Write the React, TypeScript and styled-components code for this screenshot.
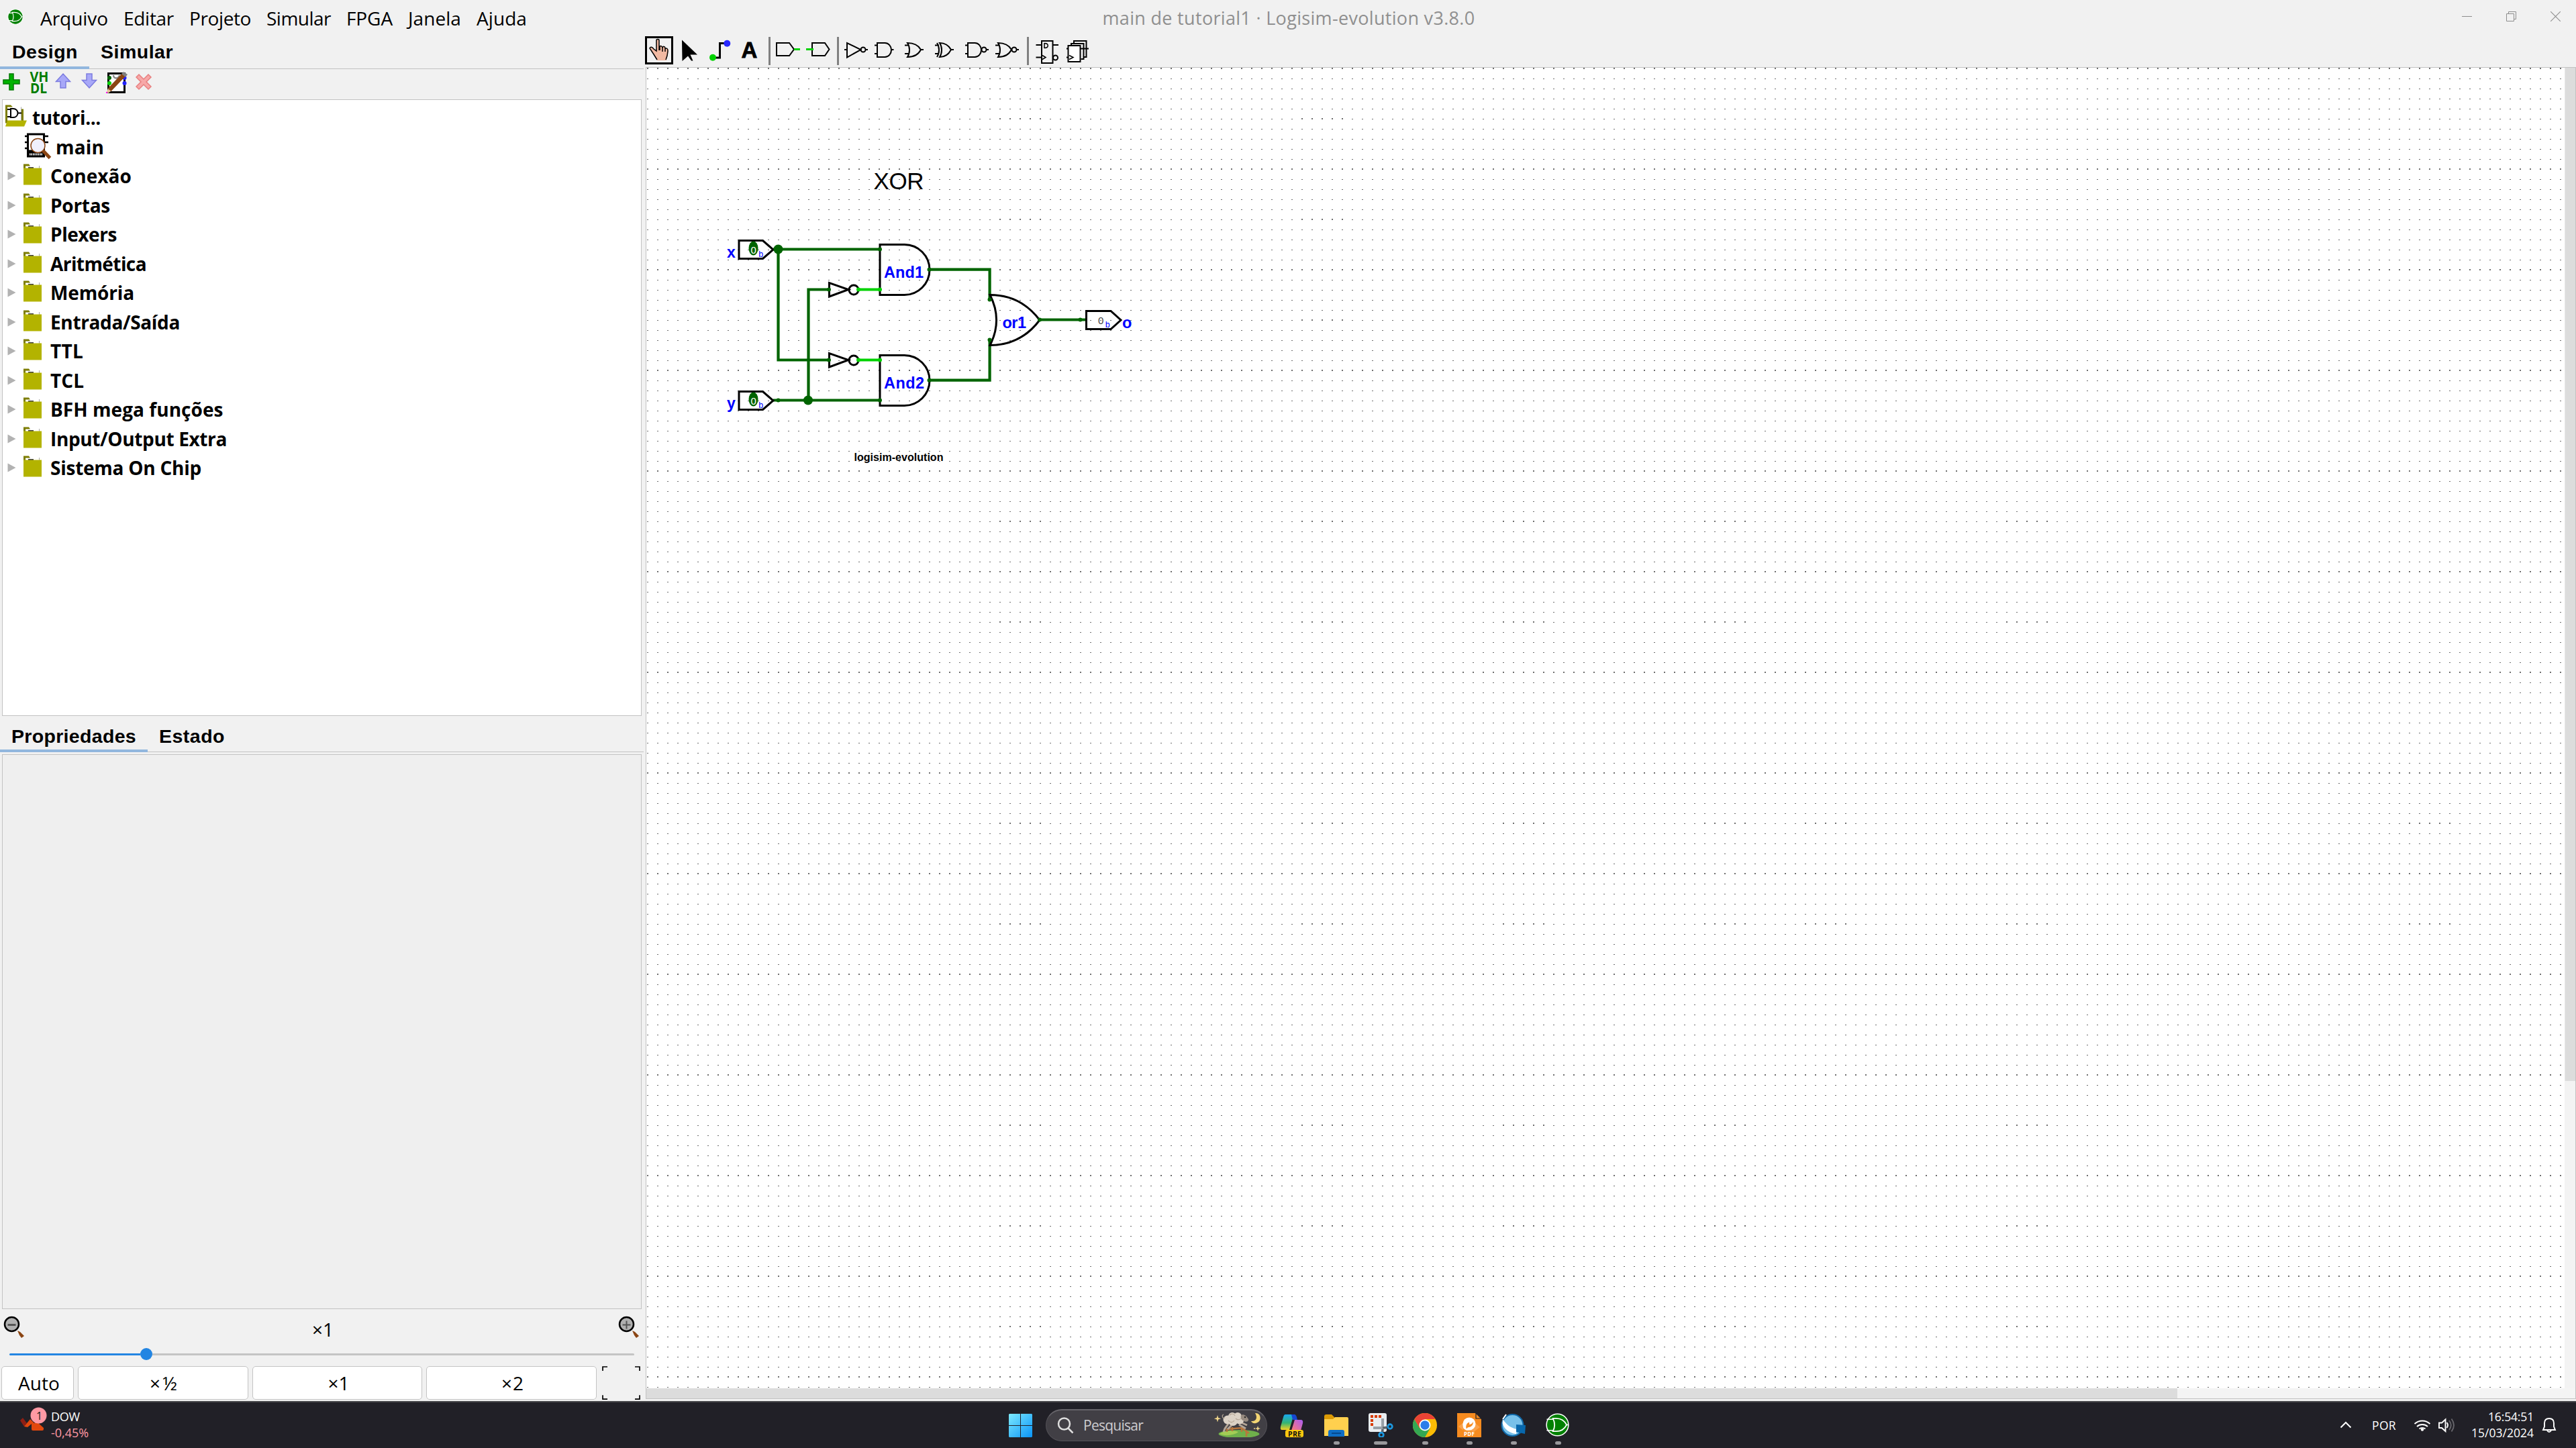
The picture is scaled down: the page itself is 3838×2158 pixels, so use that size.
import React, { useLayoutEffect, useRef, useState } from "react";
import styled, { createGlobalStyle } from "styled-components";

const Global = createGlobalStyle`
  * { box-sizing: border-box; }
  html, body { margin: 0; padding: 0; background: #f1f1f1; overflow: hidden; }
  svg { display: block; flex: none; }
`;

const UI = `"Open Sans", "Noto Sans", sans-serif`;
const ARIAL = `"Liberation Sans", Arial, sans-serif`;

const Screen = styled.div`
  width: 3838px;
  height: 2158px;
  display: flex;
  flex-direction: column;
  background: #f1f1f1;
  color: #000;
  font-family: ${UI};
`;

/* ---------- text fitted to a set advance width ---------- */
const Label = styled.span<{ $size: number; $lh?: number; $bold?: boolean; $arial?: boolean; $color?: string }>`
  display: block;
  flex: none;
  white-space: pre;
  font-family: ${(p) => (p.$arial ? ARIAL : UI)};
  font-size: ${(p) => p.$size}px;
  line-height: ${(p) => p.$lh ?? 40}px;
  font-weight: ${(p) => (p.$bold ? 700 : 400)};
  color: ${(p) => p.$color ?? "inherit"};
`;

type FitProps = { w: number; size: number; lh?: number; bold?: boolean; arial?: boolean; color?: string; children: string };

function Fit({ w, size, lh, bold, arial, color, children }: FitProps) {
  const ref = useRef<HTMLSpanElement>(null);
  const [gap, setGap] = useState(0);
  useLayoutEffect(() => {
    const el = ref.current;
    if (!el) return;
    const range = document.createRange();
    range.selectNodeContents(el);
    const natural = range.getBoundingClientRect().width - gap * children.length;
    setGap((w - natural) / children.length);
  }, [w, children]);
  return (
    <Label ref={ref} $size={size} $lh={lh} $bold={bold} $arial={arial} $color={color} style={{ width: w, letterSpacing: gap }}>
      {children}
    </Label>
  );
}

/* ---------- title bar ---------- */
const TitleBar = styled.header`
  height: 52px;
  flex: none;
  display: flex;
  align-items: flex-start;
  padding: 7px 23px 0 11px;
`;
const LogoSlot = styled.div`
  padding-top: 6px;
  width: 49px;
`;
const Menus = styled.nav`
  display: flex;
  gap: 23px;
`;
const TitleText = styled.div`
  margin-left: 857.500px;
  flex: 1;
`;
const WindowButtons = styled.div`
  display: flex;
  gap: 51px;
  padding-top: 10px;
`;

const LogisimLogo = ({ size }: { size: number }) => (
  <svg width={size} height={size} viewBox="0 0 36 36">
    <circle cx="18" cy="18" r="16.8" fill="#008000" stroke="#fff" strokeWidth="1.6" />
    <path d="M1.5 9.500h10.500M1.500 26.500h10.500M31 18h4" stroke="#fff" strokeWidth="1.700" />
    <path d="M11 8h5c8 0 13 4 16 10c-3 6-8 10-16 10h-5c3-6 3-14 0-20z" fill="#008000" stroke="#fff" strokeWidth="1.800" />
  </svg>
);

/* ---------- body ---------- */
const Body = styled.main`
  display: flex;
  height: 2036px;
  flex: none;
`;
const Side = styled.aside`
  width: 960px;
  flex: none;
  display: flex;
  flex-direction: column;
`;
const Tabs = styled.div<{ $h: number; $top: number }>`
  height: ${(p) => p.$h}px;
  width: 959px;
  flex: none;
  display: flex;
  align-items: stretch;
  background: linear-gradient(#c2c2c2, #c2c2c2) 0 100% / 100% 1px no-repeat;
  & > div {
    padding-top: ${(p) => p.$top}px;
  }
`;
const Tab = styled.div<{ $active?: boolean; $left?: number; $right?: number }>`
  padding-left: ${(p) => p.$left ?? 18}px;
  padding-right: ${(p) => p.$right ?? 18}px;
  border-bottom: 4px solid ${(p) => (p.$active ? "#92b7de" : "transparent")};
`;
const TreeTools = styled.div`
  height: 45px;
  flex: none;
  & > svg { overflow: visible; }
`;
const TreeBox = styled.div`
  height: 919px;
  width: 953px;
  margin-left: 3px;
  flex: none;
  background: #fff;
  border: 1px solid #c2c2c2;
  padding-top: 4.500px;
`;
const Row = styled.div<{ $h?: number }>`
  height: ${(p) => p.$h ?? 43.5}px;
  display: flex;
  align-items: flex-start;
`;
const PropBox = styled.div`
  height: 827px;
  width: 953px;
  margin: 3px 0 0 3px;
  flex: none;
  background: #efefef;
  border: 1px solid #c2c2c2;
`;
const ZoomRow = styled.div`
  height: 56px;
  flex: none;
  display: flex;
  padding: 10px 0 0 5px;
`;
const ZoomValue = styled.div`
  padding: 0 0 0 429px;
  width: 885px;
`;
const Slider = styled.div`
  height: 29px;
  flex: none;
  display: flex;
  align-items: flex-start;
  padding: 2px 0 0 14px;
`;
const Filled = styled.div`
  width: 195px;
  height: 3px;
  margin-top: 7.500px;
  border-radius: 2px 0 0 2px;
  background: #2385e2;
`;
const Thumb = styled.div`
  width: 18px;
  height: 18px;
  border-radius: 50%;
  background: #2385e2;
`;
const Rest = styled(Filled)`
  width: 718px;
  background: #c4c4c4;
  border-radius: 0 2px 2px 0;
`;
const ZoomButtons = styled.div`
  display: flex;
  gap: 6px;
  height: 50px;
  padding-left: 2px;
`;
const Button = styled.div<{ $w: number }>`
  width: ${(p) => p.$w}px;
  height: 50px;
  flex: none;
  display: flex;
  justify-content: center;
  padding: 4px 0 0 4px;
  background: #fff;
  border: 1.500px solid #c4c4c4;
  border-radius: 5px;
`;

/* ---------- tree ---------- */
const FolderIcon = () => (
  <svg width="71" height="43" viewBox="4 0 71 43">
    <path d="M11.500 14.500l12 6.500l-12 6.500z" fill="#b2b2b2" />
    <path d="M35 3.500h8l2 3h-7v4h-3z" fill="#7d7d00" />
    <path d="M42 9h8" stroke="#000" strokeWidth="1.500" />
    <path d="M58.500 6v4" stroke="#aaa" strokeWidth="1" />
    <rect x="35" y="9.500" width="27" height="25" fill="#b3b300" />
  </svg>
);

const folders: [string, number][] = [
  ["Conexão", 121], ["Portas", 89], ["Plexers", 99], ["Aritmética", 143], ["Memória", 125],
  ["Entrada/Saída", 193], ["TTL", 49], ["TCL", 50], ["BFH mega funções", 257.5],
  ["Input/Output Extra", 263], ["Sistema On Chip", 225],
];

/* ---------- editor ---------- */
const Editor = styled.section`
  flex: 1;
  display: flex;
  flex-direction: column;
`;
const Tools = styled.div`
  height: 48px;
  flex: none;
  display: flex;
`;
const Separator = styled.div<{ $l: number; $r: number }>`
  width: 3px;
  height: 42px;
  margin: 3px ${(p) => p.$r}px 0 ${(p) => p.$l}px;
  background: #808080;
`;
const Tool = ({ x, children }: { x: number; children: React.ReactNode }) => (
  <svg width="45" height="48" viewBox={`${x} 52 45 48`} fill="none" stroke="#000" strokeWidth="2">
    {children}
  </svg>
);
const CanvasFrame = styled.div`
  margin-left: 2px;
  height: 1985px;
  flex: none;
  display: grid;
  grid-template: 1968px 15px / 2858px 16px;
  border: 1px solid #c2c2c2;
  background: #f4f4f4;
`;
const VTrack = styled.div`
  background: #f3f3f3;
`;
const VThumb = styled.div`
  height: 1510px;
  background: #dcdcdc;
  border-left: 1px solid #e8e8e8;
`;
const HThumb = styled.div`
  width: 2281px;
  height: 15px;
  background: #dcdcdc;
`;

const G = "#006400";
const L = "#00d200";

const boldRuns: [number[], number[]][] = [
  [[177, 327], [1489, 1939]],
  [[477], [1939]],
  [[777, 927, 1677, 1827, 1977], [1489, 1939, 2239, 2539, 2989]],
  [[1227, 1377], [1489, 1939, 2239, 2539, 2689, 2989, 3589]],
];

const AndGate = ({ y, name, tw }: { y: number; name: string; tw: number }) => (
  <g>
    <path d={`M1311 ${y - 37.5}H1347.500a37.500 37.500 0 0 1 0 75H1311z`} fill="none" stroke="#000" strokeWidth="3" />
    <text x="1317" y={y + 12} fontSize="23.500" textLength={tw}>{name}</text>
  </g>
);
const Inverter = ({ y }: { y: number }) => (
  <g fill="none" stroke="#000" strokeWidth="3">
    <path d={`M1235.500 ${y - 10}v20.500L1264 ${y}z`} />
    <circle cx="1272" cy={y + 0.5} r="7" />
  </g>
);
const InPin = ({ y, name }: { y: number; name: string }) => (
  <g>
    <path d={`M1101 ${y - 13.5}H1136.500L1152 ${y}L1136.500 ${y + 13.5}H1101z`} fill="none" stroke="#000" strokeWidth="3" />
    <ellipse cx="1122.500" cy={y - 2} rx="7" ry="10.500" fill={G} />
    <text x="1118.500" y={y + 6} fontSize="15" fontWeight="400" fill="#fff">0</text>
    <text x="1130" y={y + 10.5} fontSize="12.500" fontFamily="Liberation Mono, monospace" fontWeight="400">b</text>
    <text x="1083" y={y + 12} fontSize="23">{name}</text>
  </g>
);

function Circuit() {
  return (
    <svg width="2858" height="1968" viewBox="963 101 2858 1968" fontFamily={ARIAL}>
      <defs>
        <pattern id="dots" x="964" y="102" width="15" height="15" patternUnits="userSpaceOnUse">
          <rect width="2" height="1" fill="#6e6e6e" />
        </pattern>
        <pattern id="bold" x="964" y="101" width="15" height="150" patternUnits="userSpaceOnUse">
          <rect width="2" height="1" fill="#6e6e6e" />
        </pattern>
      </defs>
      <rect x="963" y="101" width="2858" height="1968" fill="#fff" />
      <rect x="963" y="101" width="2858" height="1968" fill="url(#dots)" />
      <rect x="963" y="101" width="2858" height="1968" fill="url(#bold)" />
      {boldRuns.map(([ys, xs]) =>
        ys.map((y) => xs.map((x) => [0, 15, 30, 45, 60].map((d) => (
          <rect key={`${x + d}-${y}`} x={x + d} y={y - 1} width="2" height="1" fill="#6e6e6e" />
        ))))
      )}
      <text x="1301.500" y="282" fontSize="35" textLength="75">XOR</text>
      <text x="1272.500" y="686.500" fontSize="16.500" fontWeight="700" textLength="133" lengthAdjust="spacingAndGlyphs">logisim-evolution</text>
      <g fill="none" stroke={G} strokeWidth="4.200">
        <path d="M1152 371.500H1312M1159.500 371.500V536.500H1235M1152 596.500H1312M1204.500 596.500V431.500H1235" />
        <path d="M1549 476.500H1617" />
      </g>
      <g fontWeight="700" fill="#0000ff">
        <AndGate y={402} name="And1" tw={59} />
        <AndGate y={567} name="And2" tw={60} />
        <Inverter y={431.5} />
        <Inverter y={536.5} />
        <InPin y={372} name="x" />
        <InPin y={597} name="y" />
        <path d="M1618.500 463.500H1655L1670 477L1655 490.500H1618.500z" fill="none" stroke="#000" strokeWidth="3" />
        <text x="1636" y="483" fontSize="15" fontWeight="400" fill="#444">0</text>
        <text x="1646.500" y="487.500" fontSize="12.500" fontFamily="Liberation Mono, monospace" fontWeight="400">b</text>
        <text x="1672" y="489" fontSize="23.500">o</text>
      </g>
      <g fill="none" stroke={G} strokeWidth="4.200">
        <path d="M1384.500 401.700H1474.600V447M1384.500 566.700H1474.600V506" />
      </g>
      <path d="M1475 439.500C1507 439.500 1531 453 1549 477C1531 501 1507 514.500 1475 514.500C1487.500 490 1487.500 464 1475 439.500z" fill="none" stroke="#000" strokeWidth="3" />
      <text x="1493.500" y="489" fontSize="23.500" fontWeight="700" fill="#0000ff" textLength="35.500">or1</text>
      <path d="M1279 431.500H1311M1279 536.500H1311" stroke={L} strokeWidth="4.200" />
      <g fill={G}>
        <circle cx="1159.500" cy="371.500" r="7" />
        <circle cx="1204" cy="596.500" r="7" />
        {[[1311, 371.5], [1311, 596.5], [1235, 431.5], [1235, 536.5], [1384.5, 401.7], [1384.5, 566.7], [1474.5, 446.5], [1474.5, 506.5], [1549, 476.5], [1609.5, 476.5], [1159.5, 596.5]].map(([x, y]) => (
          <circle key={`${x},${y}`} cx={x} cy={y} r="3" />
        ))}
      </g>
      <g fill={L}>
        {[[1279, 431.5], [1311, 431.5], [1279, 536.5], [1311, 536.5]].map(([x, y]) => (
          <circle key={`${x},${y}`} cx={x} cy={y} r="3" />
        ))}
      </g>
    </svg>
  );
}

/* ---------- task bar ---------- */
const TaskBar = styled.footer`
  height: 70px;
  flex: none;
  display: flex;
  align-items: stretch;
  background: #212027;
  border-top: 2px solid #48484b;
  color: #fff;
`;
const Widget = styled.div`
  width: 1503px;
  flex: none;
  display: flex;
  padding-left: 28px;
`;
const WidgetText = styled.div`
  padding: 9px 0 0 6px;
`;
const StartSlot = styled.div`
  width: 55px;
  padding-top: 17px;
`;
const Search = styled.div`
  width: 330px;
  height: 48px;
  margin-top: 10px;
  border-radius: 24px;
  background: #413f45;
  border: 1px solid #535157;
  border-top: 2px solid #66646a;
  display: flex;
  padding-left: 16px;
`;
const SearchText = styled.div`
  width: 194px;
`;
const Apps = styled.div`
  display: flex;
  margin-left: 4px;
`;
const AppSlot = styled.div`
  width: 66px;
  display: flex;
  flex-direction: column;
  align-items: center;
  padding-top: 16px;
`;
const Dot = styled.div<{ $w: number }>`
  width: ${(p) => p.$w}px;
  height: 5px;
  margin-top: 6px;
  border-radius: 3px;
  background: #99989c;
`;
const Tray = styled.div`
  margin-left: auto;
  display: flex;
  padding-right: 27px;
`;
const Clock = styled.div`
  display: flex;
  flex-direction: column;
  align-items: flex-end;
  padding-top: 9px;
  width: 117px;
`;
const PorSlot = styled.div`
  padding: 21px 0 0 30px;
  width: 92px;
`;

const AppIcon = ({ children, ind }: { children: React.ReactNode; ind?: number }) => (
  <AppSlot>
    <svg width="38" height="36" viewBox="-1 0 38 36">{children}</svg>
    {ind ? <Dot $w={ind} /> : null}
  </AppSlot>
);

const Sheep = () => (
  <svg width="76" height="40" viewBox="1807 2105 76 40">
    <ellipse cx="1845" cy="2140" rx="30.500" ry="6" fill="#6fb04b" />
    <path d="M1816 2140c8-6 22-6 28-3c-6 5-20 7-28 3z" fill="#a3cc55" />
    <path d="M1827 2137v-5M1835 2136v-6M1849 2137v-7M1856 2144v-9M1827 2133l22-2l11 8" stroke="#b9763c" strokeWidth="2.500" fill="none" />
    <path d="M1829 2125l-5 7l-2 5M1834 2127l-6 6M1845 2126l5 3l5 3M1848 2123l9 4" stroke="#b5a596" strokeWidth="3" fill="none" />
    <g fill="#dcd2c6">
      <circle cx="1828" cy="2119" r="6.500" /><circle cx="1835" cy="2114" r="6" /><circle cx="1843" cy="2114" r="6" />
      <circle cx="1836" cy="2121" r="7" /><circle cx="1846" cy="2119" r="6.500" />
    </g>
    <path d="M1824 2116c-4 2-5-4-2-5M1831 2112c3-3 7-2 8 1M1829 2120c3 4 7 3 9 0M1840 2117c3 3 7 2 9-1" stroke="#b4a696" strokeWidth="1.200" fill="none" />
    <path d="M1848 2112c4-2 8 1 11 6c1 4-5 5-8 2c-3-1-4-5-3-8z" fill="#988b80" />
    <circle cx="1854" cy="2115" r="1.200" fill="#222" />
    <path d="M1869 2109c9-1 11 13 1 15c-3 1-6-1-7-3c8 1 10-6 6-12z" fill="#f3d573" />
    <path d="M1813 2112l1.200 4l4 1.200l-4 1.200l-1.200 4l-1.200-4l-4-1.200l4-1.200zM1873 2128l1 3l3 1l-3 1l-1 3l-1-3l-3-1l3-1z" fill="#efd58a" />
    <circle cx="1868" cy="2132" r="1" fill="#efd58a" />
  </svg>
);

export default function App() {
  return (
    <Screen>
      <Global />
      <TitleBar>
        <LogoSlot><LogisimLogo size={24} /></LogoSlot>
        <Menus>
          {([["Arquivo", 101], ["Editar", 75], ["Projeto", 92], ["Simular", 96], ["FPGA", 69], ["Janela", 79], ["Ajuda", 75]] as [string, number][]).map(([t, w]) => (
            <Fit key={t} w={w} size={28}>{t}</Fit>
          ))}
        </Menus>
        <TitleText>
          <Fit w={555} size={27} color="#8f8f8f">main de tutorial1 · Logisim-evolution v3.8.0</Fit>
        </TitleText>
        <WindowButtons>
          <svg width="15" height="15" viewBox="0 0 15 15"><path d="M0 7.500h15" stroke="#8d8d8d" /></svg>
          <svg width="15" height="15" viewBox="0 0 15 15" fill="none" stroke="#8d8d8d"><path d="M.5 3.500h11v11h-11zM3.500 3.500v-3h11v11h-3" /></svg>
          <svg width="15" height="15" viewBox="0 0 15 15"><path d="M0 0l15 15M15 0L0 15" stroke="#8d8d8d" strokeWidth="1.100" /></svg>
        </WindowButtons>
      </TitleBar>

      <Body>
        <Side>
          <Tabs $h={51} $top={5}>
            <Tab $active $left={18} $right={17}><Fit w={98} size={28.5} arial bold>Design</Fit></Tab>
            <Tab $left={17}><Fit w={108} size={28.5} arial bold>Simular</Fit></Tab>
          </Tabs>
          <TreeTools>
            <svg width="240" height="45" viewBox="0 103 240 45">
              <path d="M14 110h6v9h9v6h-9v9h-6v-9h-9v-6h9z" fill="#00b200" stroke="#007a00" strokeWidth="1.500" />
              <g fill="#007d00" fontFamily={UI} fontWeight="700" fontSize="21">
                <text x="44.500" y="122" textLength="28" lengthAdjust="spacingAndGlyphs">VH</text>
                <text x="45" y="139" textLength="25" lengthAdjust="spacingAndGlyphs">DL</text>
              </g>
              <path d="M94 110l10.500 11.500h-6.500v9.500h-8v-9.500h-6.500zM133 131l10.500-11.500h-6.500v-9.500h-8v9.500h-6.500z" fill="#a8a8f8" stroke="#7c7ce0" strokeWidth="1.500" />
              <rect x="161.500" y="109.500" width="24" height="28" fill="#fff" stroke="#000" strokeWidth="3" />
              <path d="M169 112c0 6 8 6 9 0" fill="none" stroke="#888" strokeWidth="2.500" />
              <circle cx="163" cy="116" r="3" fill="#006400" /><circle cx="163" cy="124" r="3" fill="#00d200" />
              <circle cx="185.500" cy="116" r="3" fill="#22f" /><circle cx="185.500" cy="124" r="3" fill="#22f" />
              <path d="M163 134L184 112" stroke="#8b4513" strokeWidth="6.500" />
              <path d="M184 107l6 4l-3 4l-6-5z" fill="#808080" />
              <path d="M161 132l4 4l-4 3l-2-2z" fill="#e8c39a" /><rect x="158" y="137" width="2" height="2" fill="#f0f" />
              <path d="M207 111l7 7l7-7l4 4l-7 7l7 7l-4 4l-7-7l-7 7l-4-4l7-7l-7-7z" fill="#f7a8a8" stroke="#e88080" strokeWidth="1.500" />
            </svg>
          </TreeTools>
          <TreeBox>
            <Row $h={44}>
              <svg width="44" height="44" viewBox="4 152.500 44 44">
                <path d="M8 155h8l3 3h-8v24h-3z" fill="#7d7d00" />
                <path d="M32 161h3v18h-3z" fill="#7d7d00" />
                <path d="M31.500 158v20" stroke="#aaa" />
                <path d="M11 161.500h5M11 172.500h5M16 160.500h4a6.500 6.500 0 0 1 0 13h-4zM27 167h5" fill="none" stroke="#000" strokeWidth="2" />
                <path d="M11 178h29l-4 9H8z" fill="#b3b300" />
              </svg>
              <Fit w={102} size={28} bold lh={43.5}>tutori...</Fit>
            </Row>
            <Row $h={43.5}>
              <svg width="79" height="43" viewBox="4 197.500 79 43">
                <path d="M37 202.500h35M37 211.500h35M37 220.500h6" stroke="#000" strokeWidth="2.500" />
                <rect x="41.500" y="199.500" width="24" height="33" fill="#fff" stroke="#000" strokeWidth="3" />
                <rect x="42" y="223" width="24" height="9" fill="#000" />
                <path d="M44 229.500h19" stroke="#fff" strokeWidth="3" strokeDasharray="1.500 1" />
                <circle cx="56.500" cy="216.500" r="10.500" fill="#f0f0fd" stroke="#8b4513" strokeWidth="1.500" />
                <path d="M64 224l10.500 11" stroke="#8b4513" strokeWidth="5" />
              </svg>
              <Fit w={72} size={28} bold lh={43.5}>main</Fit>
            </Row>
            {folders.map(([t, w]) => (
              <Row key={t}><FolderIcon /><Fit w={w} size={28} bold lh={43.5}>{t}</Fit></Row>
            ))}
          </TreeBox>
          <Tabs $h={54} $top={10}>
            <Tab $active $left={17} $right={17}><Fit w={186} size={28.5} arial bold>Propriedades</Fit></Tab>
            <Tab $left={17}><Fit w={98} size={28.5} arial bold>Estado</Fit></Tab>
          </Tabs>
          <PropBox />
          <ZoomRow>
            {["out", "in"].map((k) => (
              <React.Fragment key={k}>
                <svg width="31" height="34" viewBox="5 1962 31 34">
                  <path d="M26 1984l4 2l6 6l-4 3l-3-4z" fill="#8b4513" />
                  <circle cx="17.500" cy="1974.500" r="10.500" fill="#b0b0b0" stroke="#000" strokeWidth="2.500" />
                  <path d={k === "in" ? "M11.500 1975.500h12M17.500 1969.500v12" : "M11.500 1975.500h12"} stroke="#555" strokeWidth={k === "in" ? 2 : 3} />
                </svg>
                {k === "out" && <ZoomValue><Fit w={32} size={28}>×1</Fit></ZoomValue>}
              </React.Fragment>
            ))}
          </ZoomRow>
          <Slider><Filled /><Thumb /><Rest /></Slider>
          <ZoomButtons>
            <Button $w={108}><Fit w={62} size={28}>Auto</Fit></Button>
            <Button $w={254}><Fit w={44} size={28}>×½</Fit></Button>
            <Button $w={253}><Fit w={32} size={28}>×1</Fit></Button>
            <Button $w={254}><Fit w={34} size={28}>×2</Fit></Button>
            <svg width="64" height="50" viewBox="895 2036 64 50" fill="none" stroke="#000" strokeWidth="1.700">
              <path d="M905 2037h-7v6M946 2037h7v6M905 2085.200h-7v-6M946 2085.200h7v-6" />
            </svg>
          </ZoomButtons>
        </Side>

        <Editor>
          <Tools>
            <Tool x={960}>
              <rect x="962.500" y="55.500" width="39" height="39" strokeWidth="3" />
              <path d="M979 88l-5-7l-6-9c1-3 4-2 6 1l4 3V60c0-2 4-2 4 0v12l1-4c2-1 4 0 4 3l1-2c2-1 4 1 3 4l1-1c2-1 4 1 4 3l-1 7l-2 6v2h-14z" fill="#f2b9a2" stroke="none" />
              <path d="M979 89l-5-8l-6-9c1-3 4-2 6 1l4 3V60c0-2 4-2 4 0v15M983 75v-6c2-1 4 0 4 3v5M987 72c0-4 4-3 4 0v5M991 73c2-2 4-1 4 3l-1 7l-2 6" strokeWidth="1.500" />
            </Tool>
            <Tool x={1005}><path d="M1016 59.500l23 22h-10.500l4 9-2.500 0l-5-7-8.500 7.500z" fill="#000" stroke="none" /></Tool>
            <Tool x={1050}>
              <path d="M1064 86h8.500V64.500h9" strokeWidth="3" />
              <circle cx="1062" cy="85.700" r="5" fill="#00d200" stroke="none" /><circle cx="1083.300" cy="64.700" r="5" fill="#2828ff" stroke="none" />
            </Tool>
            <Tool x={1095}><text x="1104.500" y="86" fontFamily={ARIAL} fontSize="33" fontWeight="700" fill="#000" strokeWidth=".8">A</text></Tool>
            <Separator $l={5} $r={3} />
            <Tool x={1151}><path d="M1157 64h19l7 9.500l-7 9.500h-19z" /><path d="M1183 73.500h9" stroke={L} strokeWidth="3" /></Tool>
            <Tool x={1196}><path d="M1210 64h19l6.500 9.500l-6.500 9.500h-19z" /><path d="M1201 73.500h11" stroke={L} strokeWidth="3" /></Tool>
            <Separator $l={6} $r={4} />
            <Tool x={1254}><path d="M1258 74h4M1262 64v21.500l20.500-11.500zM1290 74h3" /><circle cx="1286" cy="74" r="3.500" /></Tool>
            <Tool x={1299}><path d="M1303 67.500h4M1303 80h4M1307 64h11.500a9.500 10.500 0 0 1 0 21h-11.500zM1328 74h3.500" /></Tool>
            <Tool x={1344}><path d="M1348 67.500h6M1348 80h6M1352 64c10 0 16 3 20 10c-4 8-10 11-20 11c4-6 4-15 0-21zM1372 74h4" /></Tool>
            <Tool x={1389}><path d="M1393 67.500h6M1393 80h6M1396 64c4 6 4 15 0 21M1400 64c8 0 13 3 17 10c-4 8-9 11-17 11c4-6 4-15 0-21zM1417 74h4" /></Tool>
            <Tool x={1434}><path d="M1438 67.500h4M1438 80h4M1442 64h10.500a9.500 10.500 0 0 1 0 21h-10.500zM1470 74h3" /><circle cx="1466" cy="74" r="3.500" /></Tool>
            <Tool x={1479}><path d="M1483 67.500h6M1483 80h6M1487 64c10 0 16 3 20 10c-4 8-10 11-20 11c4-6 4-15 0-21zM1515 74h3" /><circle cx="1511" cy="74" r="3.500" /></Tool>
            <Separator $l={5.5} $r={4.5} />
            <Tool x={1537}>
              <path d="M1543.500 67h8M1569 67h8M1543.500 85.500h8M1552 61h16.500v33h-16.500z" />
              <path d="M1556 64v8M1556 64.500c7 0 7 7 0 7M1553 82.500l5 3l-5 3" strokeWidth="1.500" /><circle cx="1572.500" cy="86" r="3.500" />
            </Tool>
            <Tool x={1582}>
              <path d="M1600 66v-5h18.500v24h-4M1596 69v-4h18.500v23h-4M1589 72.500h4M1589 85.500h4M1610 72.500h12" />
              <path d="M1591.500 68h18v24h-18z" fill="#fff" /><path d="M1593 82.500l6 3l-6 3" strokeWidth="1.500" />
            </Tool>
          </Tools>
          <CanvasFrame>
            <Circuit />
            <VTrack><VThumb /></VTrack>
            <HThumb />
          </CanvasFrame>
        </Editor>
      </Body>

      <TaskBar>
        <Widget>
          <svg width="42" height="60" viewBox="28 2090 42 60">
            <path d="M30 2117l4-4l6 8l-4 5z" fill="#8e1f14" />
            <path d="M36 2126l9-11l6 6l3-3l11 10v2q0 2-2 2h-14q-2 0-2-2v-8l-6 5z" fill="#e2480d" />
            <circle cx="57.500" cy="2109.500" r="12" fill="#ff99a4" />
            <text x="54" y="2115.500" fontFamily={UI} fontSize="16" fill="#222">1</text>
          </svg>
          <WidgetText>
            <Fit w={43} size={18} lh={24}>DOW</Fit>
            <Fit w={56} size={18} lh={24} color="#ff99a4">-0,45%</Fit>
          </WidgetText>
        </Widget>
        <StartSlot>
          <svg width="35" height="35" viewBox="0 0 35 35">
            <defs><linearGradient id="win" gradientUnits="userSpaceOnUse" x1="0" y1="0" x2="35" y2="35"><stop offset="0" stopColor="#7deaff" /><stop offset="1" stopColor="#0a94f8" /></linearGradient></defs>
            <path d="M1 0h16v17H0V1zM18 0h16l1 1v16H18zM0 18h17v17H1l-1-1zM18 18h17v16l-1 1H18z" fill="url(#win)" />
          </svg>
        </StartSlot>
        <Search>
          <svg width="39" height="45" viewBox="1575.500 2102 39 45" fill="none" stroke="#dedede" strokeWidth="2.500">
            <circle cx="1586" cy="2122" r="8.500" /><path d="M1592 2128.500l7 7" />
          </svg>
          <SearchText><Fit w={89} size={21} lh={44} color="#cdcccf">Pesquisar</Fit></SearchText>
          <Sheep />
        </Search>
        <Apps>
          <AppIcon>
            <defs>
              <linearGradient id="cop1" x1="0" y1="0" x2="0" y2="1"><stop offset="0" stopColor="#18a8f0" /><stop offset=".55" stopColor="#35b573" /><stop offset="1" stopColor="#f5d020" /></linearGradient>
              <linearGradient id="cop2" x1="1" y1="0" x2="0" y2="1"><stop offset="0" stopColor="#a95cf5" /><stop offset="1" stopColor="#ff7a70" /></linearGradient>
            </defs>
            <path d="M8 2h14l3 6h-6l-5 17H3q-3 0-2-5l4-14q1-4 3-4z" fill="url(#cop1)" />
            <path d="M17 2h4q3 0 4 4l1 4h-7z" fill="#1647d0" />
            <path d="M22 10h9q4 0 3 5l-3 11H17z" fill="url(#cop2)" />
            <rect x="8" y="25" width="27" height="11" rx="3" fill="#ffc90e" />
            <text x="12" y="34.500" fontFamily={UI} fontWeight="700" fontSize="10.500" textLength="20" fill="#111">PRE</text>
          </AppIcon>
          <AppIcon ind={9}>
            <path d="M0 5q0-3 3-3h8l4 4v5H0z" fill="#dc9a05" /><path d="M0 9h13l3-3h18q2 0 2 2v26H0z" fill="#ffd04e" />
            <path d="M6 35v-7q0-3 3-3h18q3 0 3 3v7z" fill="#0f6ec5" /><path d="M11 30h14" stroke="#07498d" strokeWidth="2" />
          </AppIcon>
          <AppIcon ind={20}>
            <rect x="0" y="0" width="27" height="28" rx="3" fill="#e9edf1" />
            <path d="M3 5h16M5 3v17" stroke="#d83b01" strokeWidth="4" strokeDasharray="4 2" />
            <path d="M7 22h20M21 8v20" stroke="#9aa1a8" strokeWidth="4" />
            <path d="M21 22l6-1M21 24l-1 4" stroke="#5d646b" strokeWidth="3" />
            <g fill="none" stroke="#1c98e0" strokeWidth="2.800"><circle cx="32" cy="20" r="3.300" /><circle cx="19" cy="32.500" r="3.300" /></g>
          </AppIcon>
          <AppIcon ind={9}>
            <circle cx="18" cy="18" r="18" fill="#fbbc05" />
            <path d="M2.400 9A18 18 0 0 0 18 36l7.800-13.500H10.200z" fill="#34a853" />
            <path d="M2.400 9A18 18 0 0 1 33.600 9H18L10.200 22.500z" fill="#ea4335" />
            <circle cx="18" cy="18" r="8.500" fill="#fff" /><circle cx="18" cy="18" r="6.700" fill="#2b7de9" />
          </AppIcon>
          <AppIcon ind={9}>
            <path d="M0 0h27l9 9v27H0z" fill="#f68b1f" /><path d="M28 0v8h8z" fill="#f68b1f" stroke="#212027" strokeWidth="1.200" />
            <path d="M2 20L18 7l16 14-16 12z" fill="#f9a24b" />
            <circle cx="18" cy="16" r="9.500" fill="#fff" />
            <path d="M9 26c2-8 2-12 10-15c-2 3 0 4-1 6c2 0 4-1 6-4c0 4-2 7-6 8c-3 0-4 2-5 5z" fill="#f68b1f" />
            <path d="M8.500 17c0 6 2 9 9 8.500c-3-1-5-3-4-7c1-4 4-5 8-6c-6-3-12-1-13 4.500z" fill="#fff" />
            <rect x="9" y="27" width="18" height="8" fill="#f68b1f" /><text x="10" y="33.500" fontFamily={UI} fontWeight="700" fontSize="8" textLength="16" fill="#fff">PDF</text>
          </AppIcon>
          <AppIcon ind={9}>
            <circle cx="16.500" cy="18" r="16" fill="#78c1ea" stroke="#1068a8" strokeWidth="2" />
            <path d="M2 9C8 18 14 22 23 24L22 31C12 30 4 24 1.500 15z" fill="#fff" /><path d="M2 9l5-7" stroke="#fff" strokeWidth="2" />
            <path d="M22 17l14 1l-1 13l-13-3z" fill="#0868ad" />
          </AppIcon>
          <AppIcon ind={9}><LogisimLogo size={35} /></AppIcon>
        </Apps>
        <Tray>
          <svg width="18" height="60" viewBox="3486 2090 18 60"><path d="M3487.500 2127.500l7.500-7.500l7.500 7.500" fill="none" stroke="#fff" strokeWidth="2" /></svg>
          <PorSlot><Fit w={36} size={17.5} lh={27}>POR</Fit></PorSlot>
          <svg width="62" height="60" viewBox="3596 2090 62 60" fill="none" stroke="#fff" strokeWidth="1.900">
            <path d="M3597.500 2122a17 17 0 0 1 23 0M3601 2126a12 12 0 0 1 16 0M3604.500 2129.500a7 7 0 0 1 9 0" />
            <circle cx="3609" cy="2130.500" r="2.200" fill="#fff" stroke="none" />
            <path d="M3634 2120.500h4l5.500-5v17.500l-5.500-5h-4zM3645.500 2120q3 4 0 8" />
            <path d="M3649 2117q5.500 7 0 14M3652.500 2114.500q7 9.500 0 19" stroke="#66656b" />
          </svg>
          <Clock>
            <Fit w={68} size={17.5} lh={24}>16:54:51</Fit>
            <Fit w={93} size={17.5} lh={24}>15/03/2024</Fit>
          </Clock>
          <svg width="36" height="60" viewBox="3775 2090 36 60" fill="none" stroke="#fff" strokeWidth="1.900">
            <path d="M3789 2131h18l-2-5v-5q0-7-7-7t-7 7v5zM3795 2132q3 4 6 0" />
          </svg>
        </Tray>
      </TaskBar>
    </Screen>
  );
}
